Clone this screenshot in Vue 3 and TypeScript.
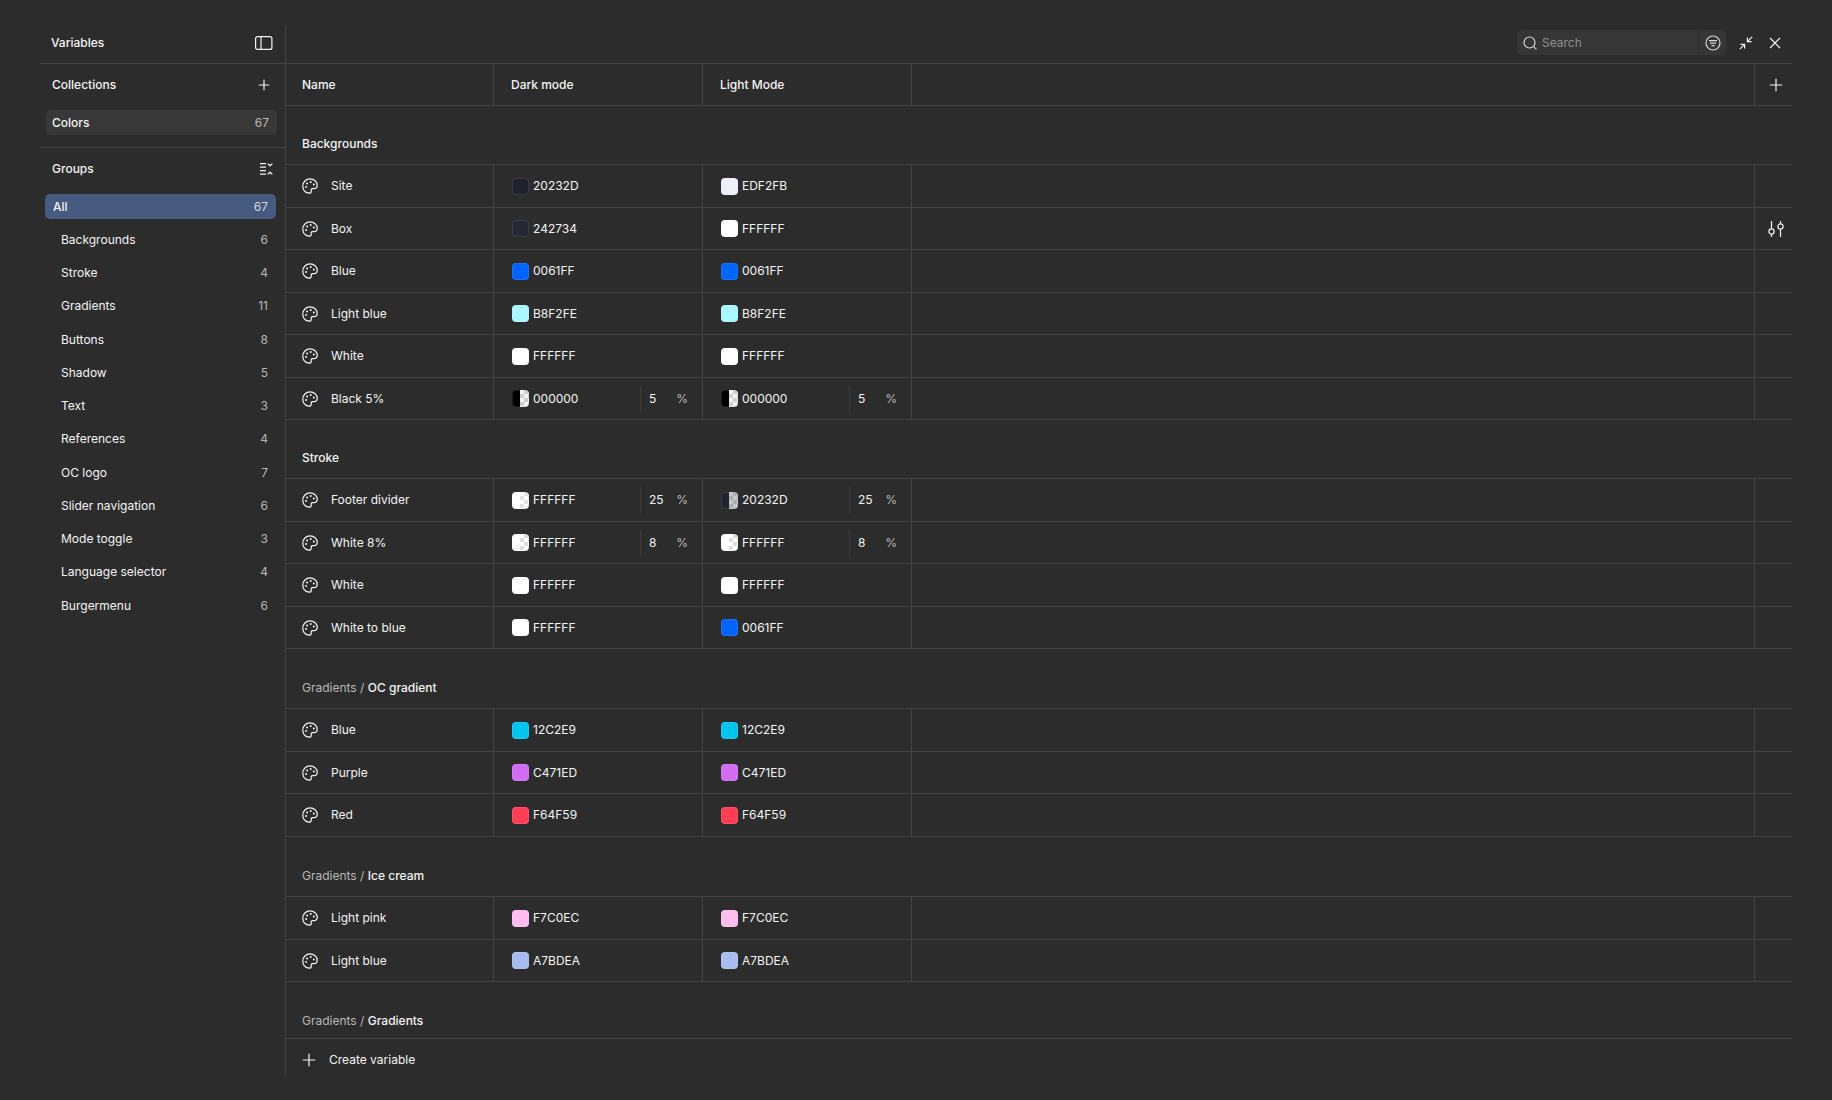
<script setup lang="ts">
interface Swatch {
  hex: string
  shown: string
  alpha?: number
}

interface Variable {
  name: string
  values: [Swatch, Swatch]
  settings?: boolean
}

interface Section {
  parent?: string
  title: string
  rows: Variable[]
}

const shownColors: Record<string, string> = {
  '20232D': '#20232d',
  '242734': '#242734',
  EDF2FB: '#edf0f9',
  '0061FF': '#0064ff',
  B8F2FE: '#a9f7ff',
  '12C2E9': '#00c5ee',
  C471ED: '#d06df3',
  F64F59: '#ff3e56',
  F7C0EC: '#fdbdee',
  A7BDEA: '#a8bdee',
}

const c = (hex: string, alpha?: number): Swatch => ({
  hex,
  shown: shownColors[hex] ?? `#${hex}`,
  alpha,
})

const groups = [
  { name: 'All', count: 67 },
  { name: 'Backgrounds', count: 6 },
  { name: 'Stroke', count: 4 },
  { name: 'Gradients', count: 11 },
  { name: 'Buttons', count: 8 },
  { name: 'Shadow', count: 5 },
  { name: 'Text', count: 3 },
  { name: 'References', count: 4 },
  { name: 'OC logo', count: 7 },
  { name: 'Slider navigation', count: 6 },
  { name: 'Mode toggle', count: 3 },
  { name: 'Language selector', count: 4 },
  { name: 'Burgermenu', count: 6 },
]

const sections: Section[] = [
  {
    title: 'Backgrounds',
    rows: [
      { name: 'Site', values: [c('20232D'), c('EDF2FB')] },
      { name: 'Box', values: [c('242734'), c('FFFFFF')], settings: true },
      { name: 'Blue', values: [c('0061FF'), c('0061FF')] },
      { name: 'Light blue', values: [c('B8F2FE'), c('B8F2FE')] },
      { name: 'White', values: [c('FFFFFF'), c('FFFFFF')] },
      { name: 'Black 5%', values: [c('000000', 5), c('000000', 5)] },
    ],
  },
  {
    title: 'Stroke',
    rows: [
      { name: 'Footer divider', values: [c('FFFFFF', 25), c('20232D', 25)] },
      { name: 'White 8%', values: [c('FFFFFF', 8), c('FFFFFF', 8)] },
      { name: 'White', values: [c('FFFFFF'), c('FFFFFF')] },
      { name: 'White to blue', values: [c('FFFFFF'), c('0061FF')] },
    ],
  },
  {
    parent: 'Gradients',
    title: 'OC gradient',
    rows: [
      { name: 'Blue', values: [c('12C2E9'), c('12C2E9')] },
      { name: 'Purple', values: [c('C471ED'), c('C471ED')] },
      { name: 'Red', values: [c('F64F59'), c('F64F59')] },
    ],
  },
  {
    parent: 'Gradients',
    title: 'Ice cream',
    rows: [
      { name: 'Light pink', values: [c('F7C0EC'), c('F7C0EC')] },
      { name: 'Light blue', values: [c('A7BDEA'), c('A7BDEA')] },
    ],
  },
  { parent: 'Gradients', title: 'Gradients', rows: [] },
]

function fill(s: Swatch): string {
  if (s.alpha === undefined) return s.shown
  const clear = `color-mix(in srgb, ${s.shown} ${s.alpha}%, transparent)`
  return (
    `linear-gradient(to right, ${s.shown} 50%, ${clear} 50%), ` +
    'repeating-conic-gradient(#dadada 0 25%, #fff 0 50%) 0 0 / 8px 8px'
  )
}
</script>

<template>
  <div class="window">
    <aside class="sidebar">
      <div class="bar side-title">
        <h1>Variables</h1>
        <button class="icon" type="button" aria-label="Toggle sidebar">
          <svg width="18" height="14" viewBox="0 0 18 14">
            <rect x=".6" y=".6" width="16.3" height="12.8" rx="2" />
            <path d="M6 .6v12.8" />
          </svg>
        </button>
      </div>

      <section class="collections">
        <div class="side-head">
          <h2>Collections</h2>
          <button class="icon" type="button" aria-label="Add collection">
            <svg width="12" height="12" viewBox="0 0 12 12"><path d="M6 .8v10.4M.8 6h10.4" /></svg>
          </button>
        </div>
        <button class="item collection" type="button">
          <span>Colors</span><span class="count">67</span>
        </button>
      </section>

      <section class="groups">
        <div class="side-head">
          <h2>Groups</h2>
          <button class="icon" type="button" aria-label="Collapse groups">
            <svg width="14" height="14" viewBox="0 0 14 14">
              <path d="M1 1.7h6M1 5.2h6M1 8.7h6M1 12.2h6M8.7 1.6l2.3 2.2 2.3-2.2M8.7 12.4l2.3-2.2 2.3 2.2" />
            </svg>
          </button>
        </div>
        <ul>
          <li v-for="(g, i) in groups" :key="g.name">
            <button class="item" :class="i === 0 ? 'selected' : 'child'" type="button">
              <span>{{ g.name }}</span><span class="count">{{ g.count }}</span>
            </button>
          </li>
        </ul>
      </section>
    </aside>

    <main>
      <header class="bar toolbar">
        <div class="search">
          <label for="search" aria-label="Search variables">
            <svg width="14" height="14" viewBox="0 0 14 14">
              <circle cx="6.5" cy="6.5" r="5.5" /><path d="M10.4 10.4l3 3" />
            </svg>
          </label>
          <input id="search" type="text" placeholder="Search" />
          <button class="icon filter" type="button" aria-label="Filter">
            <svg width="16" height="16" viewBox="0 0 16 16">
              <circle cx="8" cy="8" r="7" /><path d="M4 5.7h8M5 8.2h6M6.5 10.7h3" />
            </svg>
          </button>
        </div>
        <button class="icon collapse" type="button" aria-label="Minimize">
          <svg width="14" height="14" viewBox="0 0 14 14">
            <path d="M13.2.8L8.6 5.4M8.4 1.4v4.2h4.2M.8 13.2l4.6-4.6M1.4 8.4h4.2v4.2" />
          </svg>
        </button>
        <button class="icon close" type="button" aria-label="Close">
          <svg width="12" height="12" viewBox="0 0 12 12"><path d="M1 1l10 10M11 1L1 11" /></svg>
        </button>
      </header>

      <div class="scroll">
        <table>
          <colgroup>
            <col class="col-name" /><col class="col-mode" /><col class="col-mode" /><col /><col class="col-end" />
          </colgroup>
          <thead>
            <tr>
              <th scope="col">Name</th>
              <th scope="col" class="mode">Dark mode</th>
              <th scope="col" class="mode">Light Mode</th>
              <td></td>
              <td class="end">
                <button class="icon" type="button" aria-label="Add mode">
                  <svg width="14" height="14" viewBox="0 0 14 14"><path d="M7 .8v12.4M.8 7h12.4" /></svg>
                </button>
              </td>
            </tr>
          </thead>
          <tbody v-for="s in sections" :key="s.title">
            <tr class="section" :class="{ nested: s.parent }">
              <th colspan="5" scope="rowgroup">
                <span v-if="s.parent" class="parent">{{ s.parent }} / </span>{{ s.title }}
              </th>
            </tr>
            <tr v-for="r in s.rows" :key="r.name" class="variable">
              <td>
                <div class="name">
                  <svg width="16" height="16" viewBox="0 0 16 16">
                    <path
                      d="M6.9 15.1C3.2 14.6.8 11.7.8 8 .8 4 4 .9 8 .9s7.2 2.8 7.2 6.4c0 2-1.4 3.4-3.3 3.4h-1.3c-1.1 0-1.7.8-1.4 1.8.5 1.6-.7 2.8-2.3 2.6z"
                    />
                    <g class="dots">
                      <circle cx="4.1" cy="9.1" r="1" /><circle cx="5.1" cy="5.5" r="1" />
                      <circle cx="8.7" cy="4.1" r="1" /><circle cx="11.8" cy="6.6" r="1" />
                    </g>
                  </svg>
                  <span>{{ r.name }}</span>
                </div>
              </td>
              <td v-for="(v, i) in r.values" :key="i">
                <div class="value">
                  <span class="swatch" :style="{ background: fill(v) }"></span>
                  <span>{{ v.hex }}</span>
                  <span v-if="v.alpha !== undefined" class="alpha">
                    <span>{{ v.alpha }}</span><span class="unit">%</span>
                  </span>
                </div>
              </td>
              <td></td>
              <td class="end">
                <button v-if="r.settings" class="icon" type="button" aria-label="Edit variable">
                  <svg width="16" height="18" viewBox="0 0 16 18">
                    <path d="M3.5 1v7.8M3.5 14.2V17M12.5 1v2.6M12.5 9v8" />
                    <circle cx="3.5" cy="11.5" r="2.6" /><circle cx="12.5" cy="6.4" r="2.6" />
                  </svg>
                </button>
              </td>
            </tr>
          </tbody>
        </table>
      </div>

      <footer>
        <button class="create" type="button">
          <svg width="14" height="14" viewBox="0 0 14 14"><path d="M7 .8v12.4M.8 7h12.4" /></svg>
          <span>Create variable</span>
        </button>
      </footer>
    </main>
  </div>
</template>

<style>
body {
  margin: 0;
  background: #2c2c2c;
}
</style>

<style scoped>
.window {
  --line: #444;
  --muted: #b8b8b8;
  --strong: 550;
  box-sizing: border-box;
  display: flex;
  height: 100vh;
  padding: 26px 40px 24px;
  font: 400 12px/16px Inter, 'Liberation Sans', sans-serif;
  color: #f4f4f4;
  background: #2c2c2c;
}

h1,
h2 {
  margin: 0;
  font-size: 12px;
  font-weight: var(--strong);
}

button,
input {
  padding: 0;
  border: 0;
  background: none;
  font: inherit;
  color: inherit;
}

svg {
  display: block;
  fill: none;
  stroke: currentColor;
  stroke-width: 1.2;
}

.icon {
  display: flex;
  align-items: center;
  justify-content: center;
}

.bar {
  box-sizing: border-box;
  display: flex;
  flex: none;
  align-items: center;
  height: 38px;
  padding-bottom: 4px;
  border-bottom: 1px solid var(--line);
}

.sidebar {
  flex: none;
  width: 245px;
  border-right: 1px solid var(--line);
}

.side-title {
  justify-content: space-between;
  padding-left: 11px;
  padding-right: 12px;
}

.side-head {
  display: flex;
  align-items: center;
  justify-content: space-between;
  height: 42px;
  padding: 0 12px;
}

.collections .side-head {
  padding-right: 15px;
}

.collections {
  padding-bottom: 12px;
  border-bottom: 1px solid var(--line);
}

.item {
  box-sizing: border-box;
  display: flex;
  align-items: center;
  justify-content: space-between;
  width: 231px;
  height: 25px;
  padding: 0 8px;
  border-radius: 5px;
}

.collection {
  margin: 4px 0 0 6px;
  padding-left: 6px;
  font-weight: var(--strong);
  background: #383838;
}

.groups ul {
  display: flex;
  flex-direction: column;
  justify-content: space-between;
  height: 424px;
  margin: 4px 0 0 5px;
  padding: 0;
  list-style: none;
}

.selected {
  font-weight: var(--strong);
  background: #475a7f;
}

.child {
  padding-left: 16px;
}

.count {
  font-weight: 400;
  color: var(--muted);
}

.selected .count {
  color: #d0d6e2;
}

main {
  display: flex;
  flex: 1;
  flex-direction: column;
  min-width: 0;
}

.toolbar {
  justify-content: flex-end;
  padding-right: 11px;
}

.search {
  display: flex;
  align-items: center;
  width: 209px;
  height: 25px;
  border-radius: 5px;
  background: #363636;
}

.search label {
  padding: 0 5px 0 6px;
  color: #d8d8d8;
}

.search input {
  flex: 1;
  min-width: 0;
  outline: none;
}

.search input::placeholder {
  color: #8f8f8f;
  opacity: 1;
}

.filter {
  width: 28px;
  height: 25px;
  border-left: 1px solid #2c2c2c;
  color: #d8d8d8;
}

.collapse {
  margin-left: 13px;
}

.close {
  margin-left: 16px;
}

.scroll {
  flex: 1;
  min-height: 0;
  overflow: hidden;
}

table {
  width: 100%;
  table-layout: fixed;
  border-spacing: 0;
}

.col-name {
  width: 208px;
}

.col-mode {
  width: 209px;
}

.col-end {
  width: 38px;
}

th,
td {
  box-sizing: border-box;
  padding: 0;
  border-bottom: 1px solid var(--line);
  text-align: left;
}

th {
  padding-left: 16px;
  font-weight: var(--strong);
}

thead tr {
  height: 42px;
}

tr > :nth-child(-n + 3):not([colspan]) {
  border-right: 1px solid var(--line);
}

.mode {
  padding-left: 17px;
}

.end {
  padding-left: 4px;
  border-left: 1px solid var(--line);
}

.end .icon {
  margin: 0 auto;
}

.section {
  height: 59px;
}

.nested {
  height: 60px;
}

.section th {
  padding-top: 18px;
}

.parent {
  font-weight: 400;
  color: var(--muted);
}

.variable {
  height: 43px;
}

.variable:nth-child(odd) {
  height: 42px;
}

.name {
  display: flex;
  align-items: center;
  gap: 13px;
  padding-left: 16px;
}

.dots {
  fill: currentColor;
  stroke: none;
}

.value {
  display: flex;
  align-items: center;
  height: 26px;
  padding-left: 18px;
}

.swatch {
  box-sizing: border-box;
  width: 17px;
  height: 17px;
  margin-right: 4px;
  border: 1px solid rgb(255 255 255 / 10%);
  border-radius: 4px;
  background-origin: border-box !important;
}

.alpha {
  box-sizing: border-box;
  display: flex;
  align-items: center;
  justify-content: space-between;
  width: 62px;
  height: 26px;
  margin-left: auto;
  padding: 0 14px 0 8px;
  border-left: 1px solid #3c3c3c;
}

.unit {
  color: var(--muted);
}

footer {
  display: flex;
  flex: none;
  height: 37px;
  border-top: 1px solid var(--line);
}

.create {
  display: flex;
  align-items: center;
  gap: 13px;
  padding: 4px 16px 0;
}
</style>
